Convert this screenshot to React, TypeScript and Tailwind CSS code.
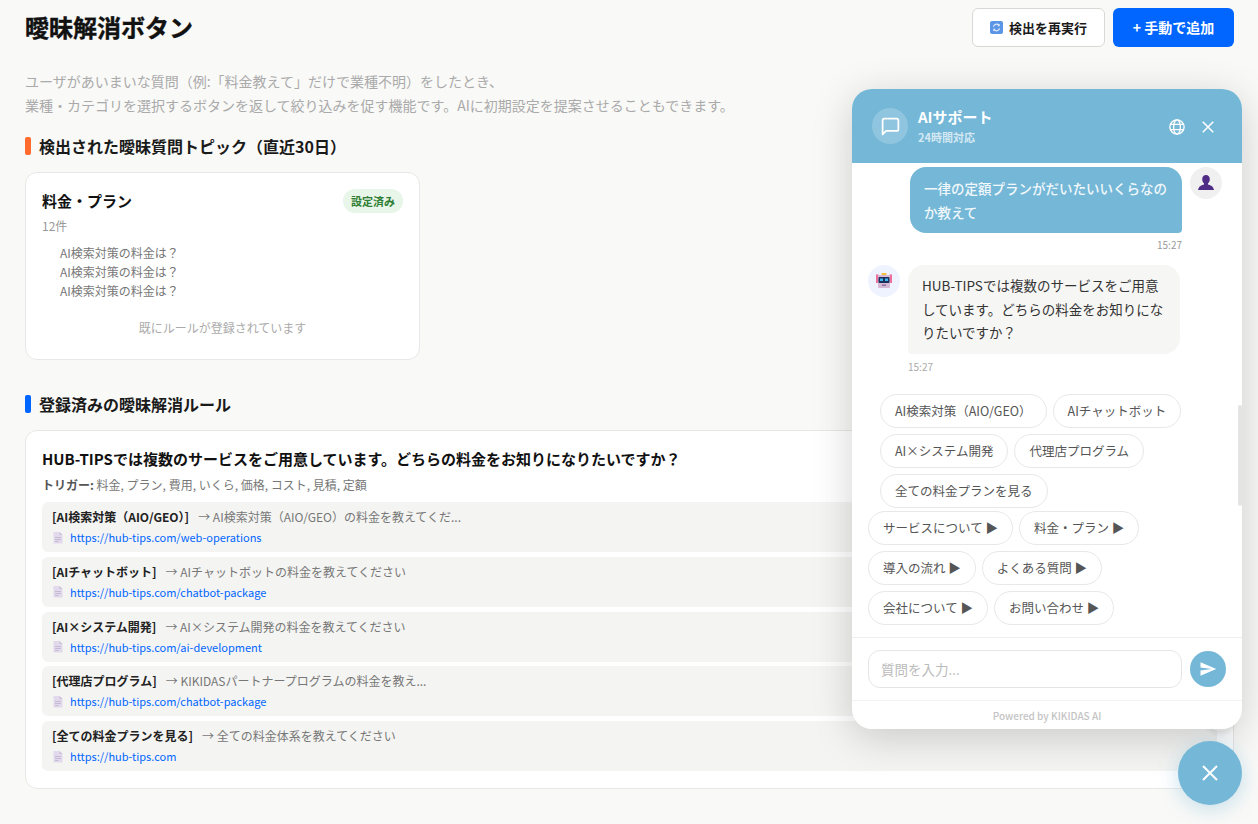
import React from "react";

const FONT = "font-['Noto_Sans_CJK_JP','Noto_Sans',sans-serif]";

const rules = [
  ["[AI検索対策（AIO/GEO）]", "→ AI検索対策（AIO/GEO）の料金を教えてくだ...", "https://hub-tips.com/web-operations"],
  ["[AIチャットボット]", "→ AIチャットボットの料金を教えてください", "https://hub-tips.com/chatbot-package"],
  ["[AI×システム開発]", "→ AI×システム開発の料金を教えてください", "https://hub-tips.com/ai-development"],
  ["[代理店プログラム]", "→ KIKIDASパートナープログラムの料金を教え...", "https://hub-tips.com/chatbot-package"],
  ["[全ての料金プランを見る]", "→ 全ての料金体系を教えてください", "https://hub-tips.com"],
];

function DocIcon() {
  return (
    <svg width="12" height="13" viewBox="0 0 12 13" className="shrink-0">
      <path d="M1.500 1h6L10.500 4v8.500h-9z" fill="#e2daec" />
      <path d="M7.500 1L10.500 4h-3z" fill="#c9bfd9" />
      <path d="M3 6.500h6M3 8.500h6M3 10.500h3.500" stroke="#c4bad4" strokeWidth="1" />
    </svg>
  );
}

function RefreshIcon() {
  return (
    <svg width="13" height="13" viewBox="0 0 13 13" className="shrink-0">
      <rect width="13" height="13" rx="2" fill="#5b95e6" />
      <path d="M3.400 5.600A3.200 3.200 0 0 1 9 4.400" fill="none" stroke="#e8f0fb" strokeWidth="1.200" />
      <path d="M9.600 7.400A3.200 3.200 0 0 1 4 8.600" fill="none" stroke="#e8f0fb" strokeWidth="1.200" />
      <path d="M9.700 2.800v2.400H7.300zM3.300 10.200V7.800h2.400z" fill="#e8f0fb" />
    </svg>
  );
}

function UserFigure() {
  return (
    <svg width="16" height="18" viewBox="0 0 16 18">
      <path d="M8 1c2.400 0 3.800 1.800 3.800 4.200 0 1.900-.8 3.300-1.800 4.100v1.300c1.900.6 4.700 1.500 5.500 3.900L16 16H0l.5-1.500c.8-2.400 3.600-3.300 5.500-3.900V9.300C5 8.500 4.200 7.100 4.200 5.200 4.200 2.800 5.600 1 8 1z" fill="#4f2c85" />
    </svg>
  );
}

function Robot() {
  return (
    <svg width="18" height="18" viewBox="0 0 18 18">
      <rect x="6.500" y="1" width="5" height="2.500" rx="0.500" fill="#f5bf3a" />
      <rect x="1" y="2.500" width="2.500" height="8.500" fill="#ec6f9e" />
      <rect x="14.500" y="2.500" width="2.500" height="8.500" fill="#ec6f9e" />
      <rect x="3" y="3" width="12" height="13" rx="1" fill="#d6b9d6" />
      <rect x="3.500" y="5" width="11" height="6" rx="1" fill="#1f2f5c" />
      <rect x="5" y="6.500" width="3" height="2.500" fill="#43b8ee" />
      <rect x="10" y="6.500" width="3" height="2.500" fill="#43b8ee" />
      <rect x="7" y="12.500" width="4" height="1.500" fill="#8b7399" />
    </svg>
  );
}

function Chip({ children }: { children: React.ReactNode }) {
  return (
    <span className="h-[34px] px-[14px] pt-[1px] flex items-center rounded-[17px] border border-[#e8e8e8] bg-white text-[12.5px] text-[#555] whitespace-nowrap">
      {children}
    </span>
  );
}

function Heading({ color, children }: { color: string; children: React.ReactNode }) {
  return (
    <div className="flex items-center gap-2">
      <span className={`w-[6px] h-[18px] rounded-[2px] ${color}`} />
      <h2 className="text-[16px] leading-[24px] font-bold text-[#1a1a1a]">{children}</h2>
    </div>
  );
}

export default function App() {
  return (
    <div className={`${FONT} relative h-[824px] w-[1258px] overflow-hidden bg-[#f9f9f7]`}>
      <main className="pl-[25px] pr-[24px] pt-2">
        <div className="flex h-[40px] items-start justify-between">
          <h1 className="text-[24px] leading-[38px] font-bold text-[#111] [-webkit-text-stroke:0.4px_#111]">曖昧解消ボタン</h1>
          <div className="flex gap-2">
            <button className="h-[39px] w-[133px] flex items-center justify-center gap-[6px] rounded-md border border-[#d8d8d4] bg-white text-[13px] font-bold text-[#1a1a1a]">
              <RefreshIcon />
              検出を再実行
            </button>
            <button className="h-[39px] w-[121px] rounded-md bg-[#0066ff] text-[14px] font-bold text-white">+ 手動で追加</button>
          </div>
        </div>

        <p className="mt-[21px] text-[14px] leading-[24px] text-[#aaaaaa]">
          ユーザがあいまいな質問（例:「料金教えて」だけで業種不明）をしたとき、
          <br />
          業種・カテゴリを選択するボタンを返して絞り込みを促す機能です。AIに初期設定を提案させることもできます。
        </p>

        <div className="mt-[17px]">
          <Heading color="bg-[#ff6b2c]">検出された曖昧質問トピック（直近30日）</Heading>
        </div>

        <section className="mt-[14px] w-[395px] h-[188px] rounded-xl border border-[#e8e8e6] bg-white px-4 pt-[16px]">
          <div className="flex items-center justify-between">
            <span className="text-[15px] leading-[24px] font-bold text-[#111]">料金・プラン</span>
            <span className="h-[24px] px-2 flex items-center rounded-xl bg-[#e8f5e9] text-[11px] font-bold text-[#2e7d32]">設定済み</span>
          </div>
          <div className="mt-[3px] text-[12px] leading-[20px] text-[#999]">12件</div>
          <ul className="mt-[7px] pl-[18px] text-[12px] leading-[19px] text-[#777]">
            <li>AI検索対策の料金は？</li>
            <li>AI検索対策の料金は？</li>
            <li>AI検索対策の料金は？</li>
          </ul>
          <div className="mt-[18.500px] text-center text-[12px] leading-[18px] text-[#aaa]">既にルールが登録されています</div>
        </section>

        <div className="mt-[32px]">
          <Heading color="bg-[#0066ff]">登録済みの曖昧解消ルール</Heading>
        </div>

        <section className="mt-[14px] h-[359px] w-[1209px] rounded-xl border border-[#e8e8e6] bg-white px-4 pt-[15px]">
          <div className="text-[15px] leading-[26px] font-bold text-[#111]">HUB-TIPSでは複数のサービスをご用意しています。どちらの料金をお知りになりたいですか？</div>
          <div className="mt-[4px] text-[12px] leading-[18px] text-[#777]">
            <b className="font-bold text-[#555]">トリガー:</b> 料金, プラン, 費用, いくら, 価格, コスト, 見積, 定額
          </div>
          <div className="mt-[8px] flex flex-col gap-[4.800px]">
            {rules.map(([label, target, url]) => (
              <div key={label} className="h-[50px] rounded-md bg-[#f4f4f2] px-[10px] pt-[6px]">
                <div className="text-[12px] leading-[18px] text-[#777]">
                  <b className="font-bold text-[#222]">{label}</b>
                  <span className="ml-[9px]">{target}</span>
                </div>
                <div className="mt-[2px] flex items-center gap-[6px] text-[11px] leading-[18px] text-[#0066ff]">
                  <DocIcon />
                  {url}
                </div>
              </div>
            ))}
          </div>
        </section>
      </main>

      {/* Button peeking out from behind the chat widget */}
      <span className="absolute left-[1206px] top-[703px] w-7 h-7 rounded-full bg-[#f3f3f1] shadow-[0_2px_6px_rgba(0,0,0,0.12)]" />

      {/* Chat widget overlay */}
      <div className="absolute left-[852px] top-[89px] w-[390px] h-[640px] flex flex-col overflow-hidden rounded-[20px] bg-white shadow-[0_8px_40px_rgba(0,0,0,0.18)]">
        <header className="h-[74px] shrink-0 flex items-center bg-[#74b7d7] pl-[20px] pr-[25px] text-white">
          <span className="w-9 h-9 flex items-center justify-center rounded-full bg-white/20">
            <svg width="21" height="21" viewBox="0 0 24 24" fill="none" stroke="#fff" strokeWidth="2" strokeLinejoin="round">
              <path d="M21 15a2 2 0 0 1-2 2H7l-4 4V5a2 2 0 0 1 2-2h14a2 2 0 0 1 2 2z" />
            </svg>
          </span>
          <div className="ml-[10px] flex-1">
            <div className="text-[15px] leading-[20px] font-bold">AIサポート</div>
            <div className="mt-[2px] text-[11px] leading-[16px] font-bold text-white/70">24時間対応</div>
          </div>
          <svg className="mt-[1px]" width="18" height="18" viewBox="0 0 24 24" fill="none" stroke="#fff" strokeWidth="1.800">
            <circle cx="12" cy="12" r="9.500" />
            <ellipse cx="12" cy="12" rx="4.500" ry="9.500" />
            <path d="M3 8.500h18M3 15.500h18" />
          </svg>
          <svg className="ml-[13px] mt-[1px]" width="18" height="18" viewBox="0 0 24 24" fill="none" stroke="#fff" strokeWidth="2">
            <path d="M5 5l14 14M19 5L5 19" />
          </svg>
        </header>

        <div className="relative flex-1 overflow-hidden pl-4 pr-5 pt-1">
          <div className="flex justify-end gap-2">
            <div className="w-[272px] rounded-2xl rounded-br-[4px] bg-[#74b7d7] px-[14px] py-[9px] text-[13.500px] leading-[24px] font-medium text-white/90">
              一律の定額プランがだいたいいくらなのか教えて
            </div>
            <span className="w-8 h-8 flex items-center justify-center rounded-full bg-[#f0f0f0]">
              <UserFigure />
            </span>
          </div>
          <div className="mt-[5px] pr-10 text-right text-[10px] leading-[14px] text-[#999]">15:27</div>

          <div className="mt-[13px] flex gap-2">
            <span className="w-8 h-8 flex items-center justify-center rounded-full bg-[#eef3ff]">
              <Robot />
            </span>
            <div className="w-[272px] rounded-2xl rounded-bl-[4px] bg-[#f6f6f4] px-[14px] py-[9px] text-[13.500px] leading-[23.500px] text-[#333]">
              HUB-TIPSでは複数のサービスをご用意しています。どちらの料金をお知りになりたいですか？
            </div>
          </div>
          <div className="mt-[6px] pl-10 text-[10px] leading-[14px] text-[#aaa]">15:27</div>

          <div className="mt-[20px] pl-3 flex flex-wrap gap-[6px] w-[320px]">
            <Chip>AI検索対策（AIO/GEO）</Chip>
            <Chip>AIチャットボット</Chip>
            <Chip>AI×システム開発</Chip>
            <Chip>代理店プログラム</Chip>
            <Chip>全ての料金プランを見る</Chip>
          </div>
          <div className="mt-[3px] flex flex-wrap gap-[6px] w-[300px]">
            <Chip>サービスについて ▶</Chip>
            <Chip>料金・プラン ▶</Chip>
            <Chip>導入の流れ ▶</Chip>
            <Chip>よくある質問 ▶</Chip>
            <Chip>会社について ▶</Chip>
            <Chip>お問い合わせ ▶</Chip>
          </div>

          <span className="absolute right-0 top-[242px] w-1 h-[101px] rounded-sm bg-[#e4e4e4]" />
        </div>

        <div className="h-[63px] shrink-0 flex items-center gap-2 border-t border-[#eeeeee] px-4">
          <div className="flex-1 h-[38px] flex items-center rounded-xl border border-[#e5e5e5] px-3 text-[13.500px] text-[#bbb]">質問を入力...</div>
          <span className="w-9 h-9 flex items-center justify-center rounded-full bg-[#74b7d7]">
            <svg width="18" height="18" viewBox="0 0 24 24" fill="#fff">
              <path d="M2.010 21L23 12 2.010 3 2 10l15 2-15 2z" />
            </svg>
          </span>
        </div>
        <div className="h-[29px] shrink-0 flex items-center justify-center border-t border-[#f3f3f3] text-[10px] font-medium text-[#c4c4c4]">
          Powered by KIKIDAS AI
        </div>
      </div>

      <button className="absolute left-[1178px] top-[741px] w-16 h-16 flex items-center justify-center rounded-full bg-[#74b7d7] shadow-[0_4px_20px_rgba(116,183,215,0.4)]">
        <svg width="24" height="24" viewBox="0 0 24 24" fill="none" stroke="#fff" strokeWidth="2">
          <path d="M5 5l14 14M19 5L5 19" />
        </svg>
      </button>
    </div>
  );
}
